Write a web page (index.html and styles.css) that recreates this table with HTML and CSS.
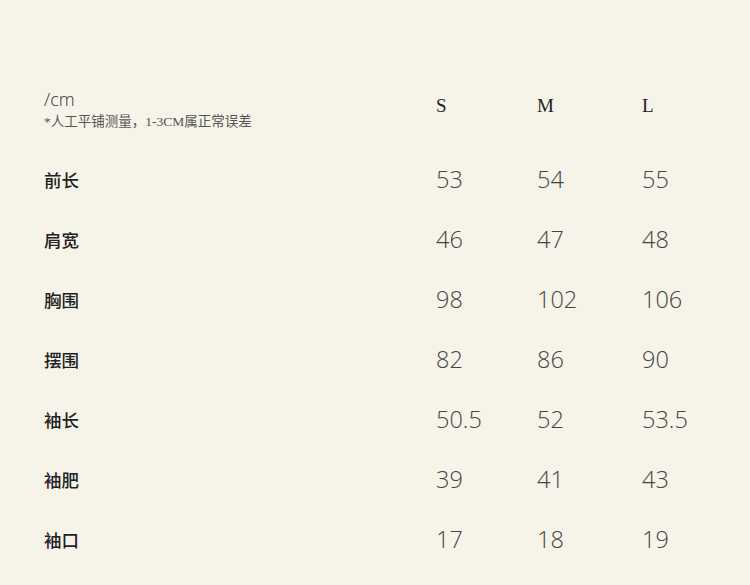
FILE: index.html
```html
<!DOCTYPE html>
<html lang="zh">
<head>
<meta charset="utf-8">
<link rel="stylesheet" href="styles.css">
</head>
<body>
<div class="sheet">
  <div class="head">
    <div class="unit">
      <div class="cm">/cm</div>
      <div class="note">*人工平铺测量，1-3CM属正常误差</div>
    </div>
    <div class="size">S</div>
    <div class="size">M</div>
    <div class="size">L</div>
  </div>
  <div class="row"><div class="label">前长</div><div class="num">53</div><div class="num">54</div><div class="num">55</div></div>
  <div class="row"><div class="label">肩宽</div><div class="num">46</div><div class="num">47</div><div class="num">48</div></div>
  <div class="row"><div class="label">胸围</div><div class="num">98</div><div class="num">102</div><div class="num">106</div></div>
  <div class="row"><div class="label">摆围</div><div class="num">82</div><div class="num">86</div><div class="num">90</div></div>
  <div class="row"><div class="label">袖长</div><div class="num">50.5</div><div class="num">52</div><div class="num">53.5</div></div>
  <div class="row"><div class="label">袖肥</div><div class="num">39</div><div class="num">41</div><div class="num">43</div></div>
  <div class="row"><div class="label">袖口</div><div class="num">17</div><div class="num">18</div><div class="num">19</div></div>
</div>
</body>
</html>
```
FILE: styles.css
```css
html, body {
  margin: 0;
  padding: 0;
  background: #f6f3e9;
}
.sheet {
  width: 750px;
  height: 585px;
  box-sizing: border-box;
  padding: 89px 0 0 44px;
  color: #333;
}
.head, .row {
  display: grid;
  grid-template-columns: 392px 101px 105px 1fr;
}
.head {
  height: 60px;
  align-items: start;
}
.cm {
  font-family: "Open Sans", sans-serif;
  font-weight: 300;
  font-size: 18px;
  line-height: 20px;
  color: #333;
}
.note {
  margin-top: 4px;
  font-family: "Liberation Serif", "Noto Sans CJK SC", serif;
  font-size: 13.5px;
  line-height: 18px;
  color: #555;
}
.size {
  margin-top: 7px;
  font-family: "Liberation Serif", serif;
  font-size: 19px;
  line-height: 20px;
  color: #222;
}
.row {
  height: 60px;
  align-items: center;
}
.label {
  font-family: "Noto Sans CJK SC", sans-serif;
  font-weight: 500;
  font-size: 17.5px;
  color: #222;
}
.num {
  font-family: "Open Sans", sans-serif;
  font-weight: 300;
  font-size: 23.5px;
  color: #444;
}
```
